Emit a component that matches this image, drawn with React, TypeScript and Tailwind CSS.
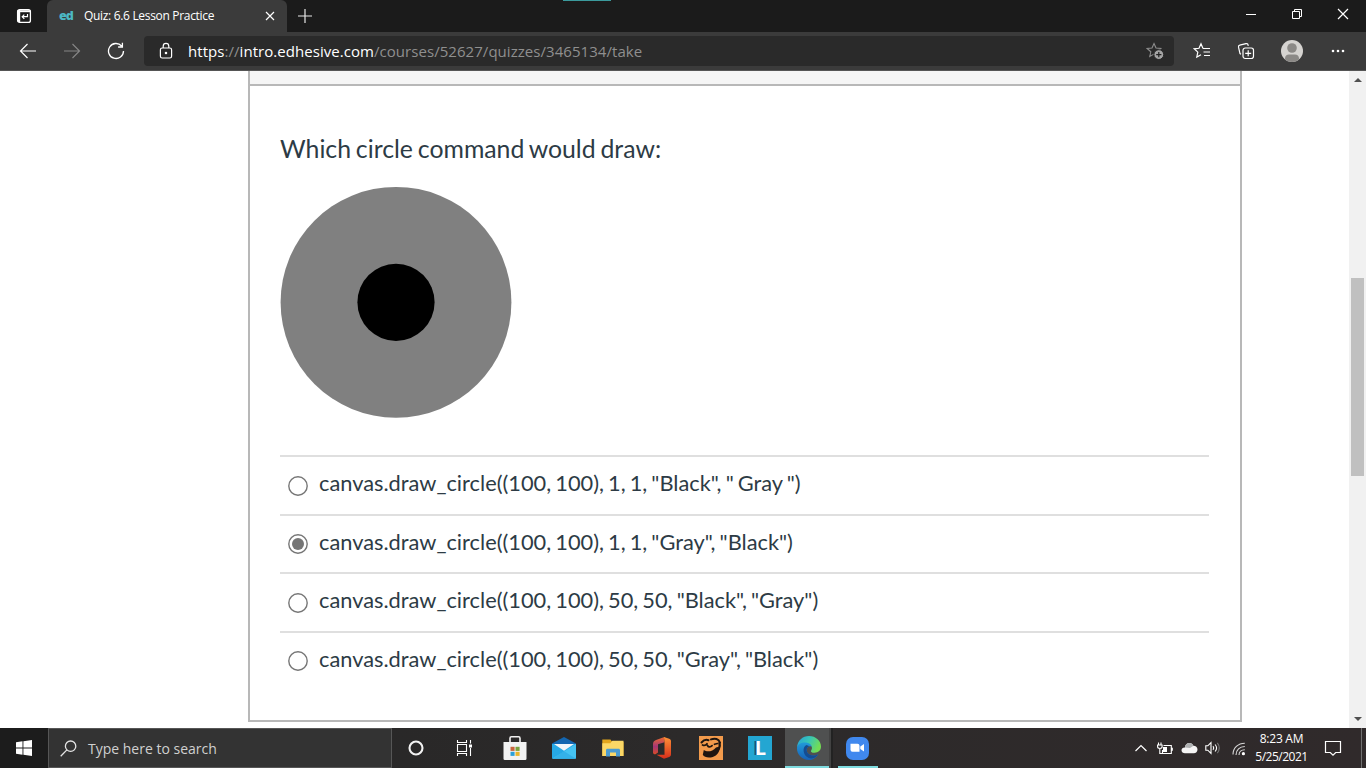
import type { ReactNode } from "react";

const ANSWERS = [
  { text: 'canvas.draw_circle((100, 100), 1, 1, "Black", " Gray ")', checked: false },
  { text: 'canvas.draw_circle((100, 100), 1, 1, "Gray", "Black")', checked: true },
  { text: 'canvas.draw_circle((100, 100), 50, 50, "Black", "Gray")', checked: false },
  { text: 'canvas.draw_circle((100, 100), 50, 50, "Gray", "Black")', checked: false },
];

const STAR = "M8 1.5 L10 6 L14.8 6.5 L11.2 9.8 L12.2 14.5 L8 12.1 L3.8 14.5 L4.8 9.8 L1.2 6.5 L6 6 Z";

function TabBar() {
  return (
    <div className="flex h-8 shrink-0 bg-[#1b1b1b] text-white">
      <div className="flex w-[47px] items-center justify-center">
        <svg width="16" height="16" viewBox="0 0 16 16" fill="none" stroke="#fff">
          <rect x="1.6" y="1.6" width="12.8" height="12.8" rx="2" strokeWidth="1.3" />
          <path d="M1.5 3.2h13" strokeWidth="2" />
          <path d="M3 2v12" strokeWidth="2.4" />
          <path d="M11.5 6v2.7H6.3M8.3 6.6 6.2 8.7l2.1 2.1" strokeWidth="1.2" />
        </svg>
      </div>
      <div className="flex w-60 items-center rounded-t-md bg-[#3b3b3b] pl-3">
        <span className="w-[25px] font-['Open_Sans',sans-serif] text-[12.5px] font-extrabold tracking-[-0.9px] text-[#4cb8c4]">ed</span>
        <span className="w-[174px] whitespace-nowrap font-['Open_Sans',sans-serif] text-[12px] tracking-[-0.32px]">Quiz: 6.6 Lesson Practice</span>
        <svg className="ml-1.5" width="12" height="12" viewBox="0 0 12 12" stroke="#fff" strokeWidth="1.2">
          <path d="M2 2l8 8M10 2l-8 8" />
        </svg>
      </div>
      <div className="flex w-9 items-center justify-center">
        <svg width="16" height="16" viewBox="0 0 16 16" stroke="#e8e8e8" strokeWidth="1.2">
          <path d="M1 8h14M8 1v14" />
        </svg>
      </div>
      <div className="flex-1 pl-60">
        <div className="h-px w-12 bg-[#3b9a9c]" />
      </div>
      <div className="flex pb-1">
        <Slot w="w-[46px]">
          <svg width="12" height="12" viewBox="0 0 12 12" stroke="#fff"><path d="M1 6.5h10" /></svg>
        </Slot>
        <Slot w="w-[46px]">
          <svg width="12" height="12" viewBox="0 0 12 12" stroke="#fff" fill="none"><path d="M1.5 3.5h7v7h-7zM3.5 3V1.5h7v7H9" /></svg>
        </Slot>
        <Slot w="w-[46px]">
          <svg width="12" height="12" viewBox="0 0 12 12" stroke="#fff" strokeWidth="1.2"><path d="M1 1l10 10M11 1L1 11" /></svg>
        </Slot>
      </div>
    </div>
  );
}

function Slot({ w, children }: { w: string; children: ReactNode }) {
  return <div className={`flex shrink-0 items-center justify-center ${w}`}>{children}</div>;
}

function Toolbar() {
  return (
    <div className="flex h-[39px] shrink-0 items-center border-b border-[#555] bg-[#3b3b3b] pl-1.5">
      <Slot w="w-11">
        <svg width="18" height="16" viewBox="0 0 18 16" stroke="#fff" fill="none" strokeWidth="1.2"><path d="M17 8H1.5M8.5 1 1.5 8l7 7" /></svg>
      </Slot>
      <Slot w="w-11">
        <svg width="18" height="16" viewBox="0 0 18 16" stroke="#858585" fill="none" strokeWidth="1.2"><path d="M1 8h15.5M9.5 1l7 7-7 7" /></svg>
      </Slot>
      <Slot w="w-11">
        <svg width="18" height="18" viewBox="0 0 18 18" stroke="#fff" fill="none" strokeWidth="1.3"><path d="M16.5 9A7.5 7.5 0 1 1 14.6 4M15.4 0.8V5h-4.3" /></svg>
      </Slot>
      <div className="ml-1.5 flex h-[30px] w-[1030px] items-center rounded bg-[#2a2a2a]">
        <Slot w="w-11">
          <svg width="14" height="18" viewBox="0 0 14 18" stroke="#fff" fill="none" strokeWidth="1.2">
            <rect x="1.4" y="6" width="11.2" height="10" rx="1.8" />
            <path d="M4.2 6V4.2a2.8 2.8 0 0 1 5.6 0V6" />
            <circle cx="7" cy="11" r="0.7" fill="#fff" />
          </svg>
        </Slot>
        <div className="flex-1 whitespace-nowrap font-['Open_Sans',sans-serif] text-[15px] tracking-[0.05px] text-[#8f8f8f]">
          <span className="text-white">https</span>://<span className="text-white">intro.edhesive.com</span>/courses/52627/quizzes/3465134/take
        </div>
        <Slot w="w-[38px]">
          <svg width="18" height="18" viewBox="0 0 18 18" fill="none" stroke="#8d8d8d" strokeWidth="1.1">
            <path d={STAR} />
            <circle cx="12.8" cy="12.6" r="4.9" fill="#a5a5a5" stroke="#2a2a2a" strokeWidth="1" />
            <path d="M12.8 10v5.2M10.2 12.6h5.2" stroke="#222" strokeWidth="1.2" />
          </svg>
        </Slot>
      </div>
      <Slot w="ml-1.5 w-11">
        <svg width="18" height="18" viewBox="0 0 18 18" fill="none" stroke="#fff" strokeWidth="1.2">
          <path d="M10 6.4 8 1.8 6 6.3 1.2 6.8l3.6 3.3-1 4.9 4.2-2.3M10 6.5h7M10.5 10H17M11 13.5h6" />
        </svg>
      </Slot>
      <Slot w="w-11">
        <svg width="18" height="18" viewBox="0 0 18 18" fill="none" stroke="#fff" strokeWidth="1.2">
          <rect x="6" y="6" width="10.5" height="10.5" rx="2.2" />
          <path d="M11.2 8.3v6M8.2 11.3h6M4 12.2 3 11.6 1.5 5.2c-.2-1 .3-1.8 1.2-2L9 1.6c1-.2 1.8.2 2 1.2l.3 1" />
        </svg>
      </Slot>
      <Slot w="ml-px w-[46px]">
        <svg width="22" height="22" viewBox="0 0 22 22">
          <circle cx="11" cy="11" r="11" fill="#d5d3d0" />
          <circle cx="11" cy="8" r="4.8" fill="#8b8986" />
          <path d="M4 19.4v-1.2C4 15.9 5.7 14.5 8 14.5h6c2.3 0 4 1.4 4 3.7v1.2a11 11 0 0 1-14 0z" fill="#8b8986" />
        </svg>
      </Slot>
      <Slot w="w-[46px]">
        <svg width="16" height="4" viewBox="0 0 16 4" fill="#fff"><circle cx="3" cy="2" r="1.3" /><circle cx="8" cy="2" r="1.3" /><circle cx="13" cy="2" r="1.3" /></svg>
      </Slot>
    </div>
  );
}

function Question() {
  return (
    <div className="ml-[248px] flex h-[651px] w-[994px] flex-col border-x-2 border-b-2 border-[#b8b8b8] font-[Lato,sans-serif] text-[#2d3b45]">
      <div className="h-[15px] shrink-0 border-b-2 border-[#b8b8b8] bg-[#f5f5f5]" />
      <div className="pr-[31px] pl-[30px]">
        <h1 className="mt-[47px] h-8 whitespace-nowrap text-[24.8px] leading-8 [word-spacing:-1.5px]">Which circle command would draw:</h1>
        <svg className="mt-[21px]" width="232" height="232" viewBox="0 0 232 232">
          <circle cx="116" cy="116.3" r="115.4" fill="#808080" />
          <circle cx="116" cy="116.3" r="38.6" fill="#000" />
        </svg>
        <div className="mt-[37px]">
          {ANSWERS.map((answer) => (
            <label key={answer.text} className="flex h-[58.5px] items-center border-t-2 border-[#dfdfdf] pl-2">
              <svg className="mt-px shrink-0" width="20" height="20" viewBox="0 0 20 20">
                <circle cx="10" cy="10" r="9.2" fill="#fff" stroke="#767676" strokeWidth="1.4" />
                {answer.checked && <circle cx="10" cy="10" r="6" fill="#767676" />}
              </svg>
              <span className="ml-[11px] whitespace-nowrap pb-1 text-[21.8px] leading-7 [word-spacing:-1.5px]">{answer.text}</span>
            </label>
          ))}
        </div>
      </div>
    </div>
  );
}

function Scrollbar() {
  return (
    <div className="flex w-[17px] flex-col items-center bg-[#f1f1f1]">
      <svg className="mt-1.5" width="8" height="6" viewBox="0 0 8 6"><path d="M0 5l4-4 4 4z" fill="#505050" /></svg>
      <div className="mt-[195px] h-[198px] w-[13px] bg-[#c0c0c0]" />
      <svg className="mt-auto mb-1.5" width="8" height="6" viewBox="0 0 8 6"><path d="M0 1l4 4 4-4z" fill="#505050" /></svg>
    </div>
  );
}

function Taskbar() {
  return (
    <div className="flex h-10 shrink-0 bg-gradient-to-r from-[#252525] via-[#2c2a2a] to-[#302a2b] font-['Open_Sans',sans-serif]">
      <Slot w="w-12 bg-[#1c1c1c]">
        <svg width="16" height="16" viewBox="0 0 16 16" fill="#fff"><path d="M0 2.2 6.5 1.3v6.2H0zM7.4 1.2 16 0v7.5H7.4zM0 8.4h6.5v6.3L0 13.8zM7.4 8.4H16V16l-8.6-1.2z" /></svg>
      </Slot>
      <div className="flex w-[344px] items-center border border-[#565656] bg-[#333] pl-[11px]">
        <svg width="17" height="17" viewBox="0 0 17 17" fill="none" stroke="#e4e4e4" strokeWidth="1.3"><circle cx="10.6" cy="6.2" r="5.2" /><path d="M6.9 9.9.7 16.2" /></svg>
        <span className="ml-[11px] whitespace-nowrap pt-px text-[14px] text-[#d0d0d0]">Type here to search</span>
      </div>
      <Slot w="w-12">
        <svg width="16" height="16" viewBox="0 0 16 16"><circle cx="8" cy="8" r="6.5" fill="none" stroke="#f2f2f2" strokeWidth="2.1" /></svg>
      </Slot>
      <Slot w="w-[49px]">
        <svg width="18" height="16" viewBox="0 0 18 16" fill="none" stroke="#fff" strokeWidth="1.1"><path d="M1.5 0v2.5h9V0M1.5 16v-2.5h9V16M1.5 4.5h9v7h-9zM14.5 0v3.5M14.5 8v8" /><path d="M13 4.5h3v3h-3z" fill="#fff" stroke="none" /></svg>
      </Slot>
      <Slot w="ml-px w-[49px]">
        <svg width="24" height="26" viewBox="0 0 24 26">
          <path d="M7 8V3.2C7 2 7.6 1.7 8.4 1.7h7.2c.8 0 1.4.3 1.4 1.5V8" fill="none" stroke="#f1f1f1" strokeWidth="1.6" />
          <path d="M.5 7h23v16.5a1.4 1.4 0 0 1-1.4 1.5H1.9A1.4 1.4 0 0 1 .5 23.5z" fill="#f2f2f2" />
          <path d="M7.5 11.8h4.1v4.1H7.5z" fill="#c8643c" /><path d="M12.5 11.8h4.1v4.1h-4.1z" fill="#78a23c" />
          <path d="M7.5 16.8h4.1v4.1H7.5z" fill="#2ba0d8" /><path d="M12.5 16.8h4.1v4.1h-4.1z" fill="#e8b52c" />
        </svg>
      </Slot>
      <Slot w="w-[49px]">
        <svg width="26" height="24" viewBox="0 0 26 24">
          <path d="M1 7.5 13 1l12 6.5V15H1z" fill="#1466b0" />
          <path d="M1 8h24v13.8a1 1 0 0 1-1 1H2a1 1 0 0 1-1-1z" fill="#26a9e6" />
          <path d="M1 22.8 25 8v13.8a1 1 0 0 1-1 1z" fill="#45c3f2" />
          <path d="M13 15.3 25 22.8H1.8z" fill="#1c96db" opacity=".4" />
          <path d="M3 8h20l-10 6.8z" fill="#f3f6f9" />
        </svg>
      </Slot>
      <Slot w="w-[49px]">
        <svg width="24" height="20" viewBox="0 0 24 20">
          <path d="M1.3 1.6h8.2l1.8 2.3h11.2v14H1.3z" fill="#e2a51d" />
          <path d="M1.3 5.2h8l2-2.4h11.2v15.1H1.3z" fill="#fbd766" />
          <path d="M5 18.5v-6.2c0-1 .5-1.6 1.4-1.6h11.2c.9 0 1.4.6 1.4 1.6v6.2h-4v-4H9v4z" fill="#4b9bd0" />
        </svg>
      </Slot>
      <Slot w="w-[49px]">
        <svg width="22" height="24" viewBox="0 0 22 24">
          <defs>
            <linearGradient id="officeSide" x1="0" y1="0" x2="0" y2="1"><stop stopColor="#ee6b2d" /><stop offset=".55" stopColor="#a53676" /><stop offset="1" stopColor="#d94b26" /></linearGradient>
            <linearGradient id="officeFront" x1="0" y1="0" x2="0" y2="1"><stop stopColor="#ff9237" /><stop offset="1" stopColor="#d52e1b" /></linearGradient>
          </defs>
          <path d="M13.5 1 5 4C3 4.7 2 6.2 2 8v8.5c0 1.6 1.9 2.4 3.2 1.3L7 16.4V8.2l6.5-2z" fill="url(#officeSide)" />
          <path d="M5.5 18.7h8V5.5L13 1l5.2 1.8C19.5 3.3 20 4.2 20 5.3v13.2c0 1.1-.6 2-1.8 2.4L13 22.7z" fill="url(#officeFront)" />
        </svg>
      </Slot>
      <Slot w="w-[49px]">
        <svg width="24" height="24" viewBox="0 0 24 24">
          <path d="M0 0h24v24H0z" fill="#f39b4c" />
          <g fill="none" stroke="#1f1610" strokeLinecap="round" strokeLinejoin="round">
            <path d="M2.5 6.5C4.5 4.2 7 3.2 9.5 4.2M12 3.4c4-1.6 7.6-.6 9 3.1" strokeWidth="2" />
            <path d="M3.5 9c1.8.8 3.5.2 4.5-1.3M8.5 9.5c1 2 3.2 1.6 4.6.1M15.5 8.3l3-.8" strokeWidth="1.7" />
            <path d="M20.5 7c1 4-1 8-5.5 9.5" strokeWidth="2.4" />
          </g>
          <path d="M4.8 14c3 2.2 8.5 2 12.2-2.6l3.8-.9c.3 5-2.5 9-7 10.4-4.3 1.3-8.6.4-10-2.2z" fill="#1f1610" />
        </svg>
      </Slot>
      <Slot w="w-[49px]">
        <div className="flex size-6 items-center justify-center bg-[#23a6d2] pl-0.5">
          <span className="font-['Open_Sans',sans-serif] text-[20px] leading-6 font-bold text-white [text-shadow:-2px_0_0_#15517e]">L</span>
        </div>
      </Slot>
      <div className="ml-px flex w-[48px] border-r-2 border-[#222] bg-[#424242]">
        <div className="flex w-11 items-center justify-center border-b-2 border-[#7fdce0] bg-[#4f5050] pt-0.5 pl-1">
          <svg width="26" height="26" viewBox="0 0 26 26">
            <defs>
              <linearGradient id="edgeTop" x1="0" y1="0" x2="1" y2=".4"><stop stopColor="#279ed9" /><stop offset=".5" stopColor="#36c5b8" /><stop offset="1" stopColor="#72dc55" /></linearGradient>
              <linearGradient id="edgeBody" x1="0" y1="0" x2="0" y2="1"><stop stopColor="#219ad9" /><stop offset="1" stopColor="#1760b6" /></linearGradient>
            </defs>
            <path d="M1 12.5C1.5 5.5 6.5 1 13 1c7 0 12 5 12 10.6 0 4-3 6.2-6.3 6.2-3 0-4.5-1.2-3.4-2.6 2.2-3-1-6.7-5.3-6.7-4.2 0-7.6 1.5-9 4z" fill="url(#edgeTop)" />
            <path d="M1 12.8C2 8.8 6 7.1 10 7.6c3.3.4 5.4 2.2 5.8 4.2-2.2-1.3-5.2.1-5.1 3.2.1 4.5 5.7 7.3 11.5 4.2C20 23.1 16.8 25 13 25 6 25 .6 19.4 1 12.8z" fill="url(#edgeBody)" />
            <path d="M10.5 10C6 12 6.6 20.5 12.8 23c3.2 1.3 7.2-.3 9.4-3.8-5.8 3.1-11.4.3-11.5-4.2 0-2.2 1.2-3.5 2.8-3.8z" fill="#154c91" />
          </svg>
        </div>
      </div>
      <div className="flex w-[49px] justify-center">
        <div className="flex w-10 items-center justify-center border-b-2 border-[#7fdce0] pt-0.5">
          <div className="flex size-[23px] items-center justify-center rounded-[7px] bg-[#4088ee]">
            <svg width="15" height="10" viewBox="0 0 15 10" fill="#fff"><path d="M.5.8h7a2 2 0 0 1 2 2v6h-7a2 2 0 0 1-2-2zM10.3 3.5 14 1v7.5L10.3 6z" /></svg>
          </div>
        </div>
      </div>
      <div className="flex-1" />
      <div className="flex items-center">
        <Slot w="w-6">
          <svg width="12" height="8" viewBox="0 0 12 8" fill="none" stroke="#fff" strokeWidth="1.2"><path d="m.5 7 5.5-5.5L11.5 7" /></svg>
        </Slot>
        <Slot w="w-6">
          <svg width="16" height="13" viewBox="0 0 16 13" fill="none" stroke="#fff" strokeWidth="1.1"><path d="M6.5 3.5h7.8v8H5.5V8M15.3 5.8v3M1.5.5v2.3M4 .5v2.3M.6 3h4.5v1.8c0 1-1 1.7-2.2 1.7S.6 5.8.6 4.8zM2.8 6.5v5h3" /><path d="M6 5h4v5H6z" fill="#fff" stroke="none" /></svg>
        </Slot>
        <Slot w="w-[25px]">
          <svg width="17" height="12" viewBox="0 0 17 12"><path d="M4 5.5C4 2.6 6 1 8.4 1c2 0 3.4 1.2 4 2.8 2.4 0 4.1 1.5 4.1 3.7 0 2.4-1.6 3.8-3.7 3.8H4C2 11.3.5 10 .5 8.3.5 6.5 2 5.3 4 5.5z" fill="#f4f4f4" /><path d="M4 5.5C4 2.6 6 1 8.4 1c2 0 3.4 1.2 4 2.8L9 6z" fill="#aeb0b1" /></svg>
        </Slot>
        <Slot w="w-[22px]">
          <svg width="17" height="14" viewBox="0 0 17 14" fill="none" stroke="#fff" strokeWidth="1.1"><path d="M.8 4.8h2L6 1.5v11L2.8 9.2h-2zM8 5.2c.8 1 .8 2.6 0 3.6M10.1 3.5c1.7 2 1.7 5 0 7" /><path d="M12.3 1.8c2.6 3 2.6 7.4 0 10.4" stroke="#777" /></svg>
        </Slot>
        <Slot w="w-[30px]">
          <svg className="mt-0.5" width="14" height="14" viewBox="0 0 14 14" fill="none" stroke="#d8d8d8" strokeWidth="1.1"><path d="M1 12.5C1 6 6 1.2 12.8 1.2M4 13c0-4.8 3.7-8.5 8.8-8.5M7 13c0-3 2.3-5.2 5.8-5.2" /><circle cx="11.4" cy="11.7" r="1.6" fill="#fff" stroke="none" /></svg>
        </Slot>
        <div className="w-[55px] text-center text-[12px] leading-[18px] tracking-[-0.5px] whitespace-nowrap text-white">
          <div className="tracking-[-0.25px]">8:23 AM</div>
          <div>5/25/2021</div>
        </div>
        <Slot w="w-12">
          <svg width="18" height="18" viewBox="0 0 18 18" fill="none" stroke="#fff" strokeWidth="1.2"><path d="M1.5 2.5h15v11h-4.8L9 16.2l-2.7-2.7H1.5z" /></svg>
        </Slot>
        <div className="mr-1 ml-1 h-10 w-px bg-[#707070]" />
      </div>
    </div>
  );
}

export default function App() {
  return (
    <div className="flex h-[768px] w-[1366px] flex-col overflow-hidden bg-white">
      <TabBar />
      <Toolbar />
      <main className="flex h-[657px] shrink-0 justify-between">
        <Question />
        <Scrollbar />
      </main>
      <Taskbar />
    </div>
  );
}
